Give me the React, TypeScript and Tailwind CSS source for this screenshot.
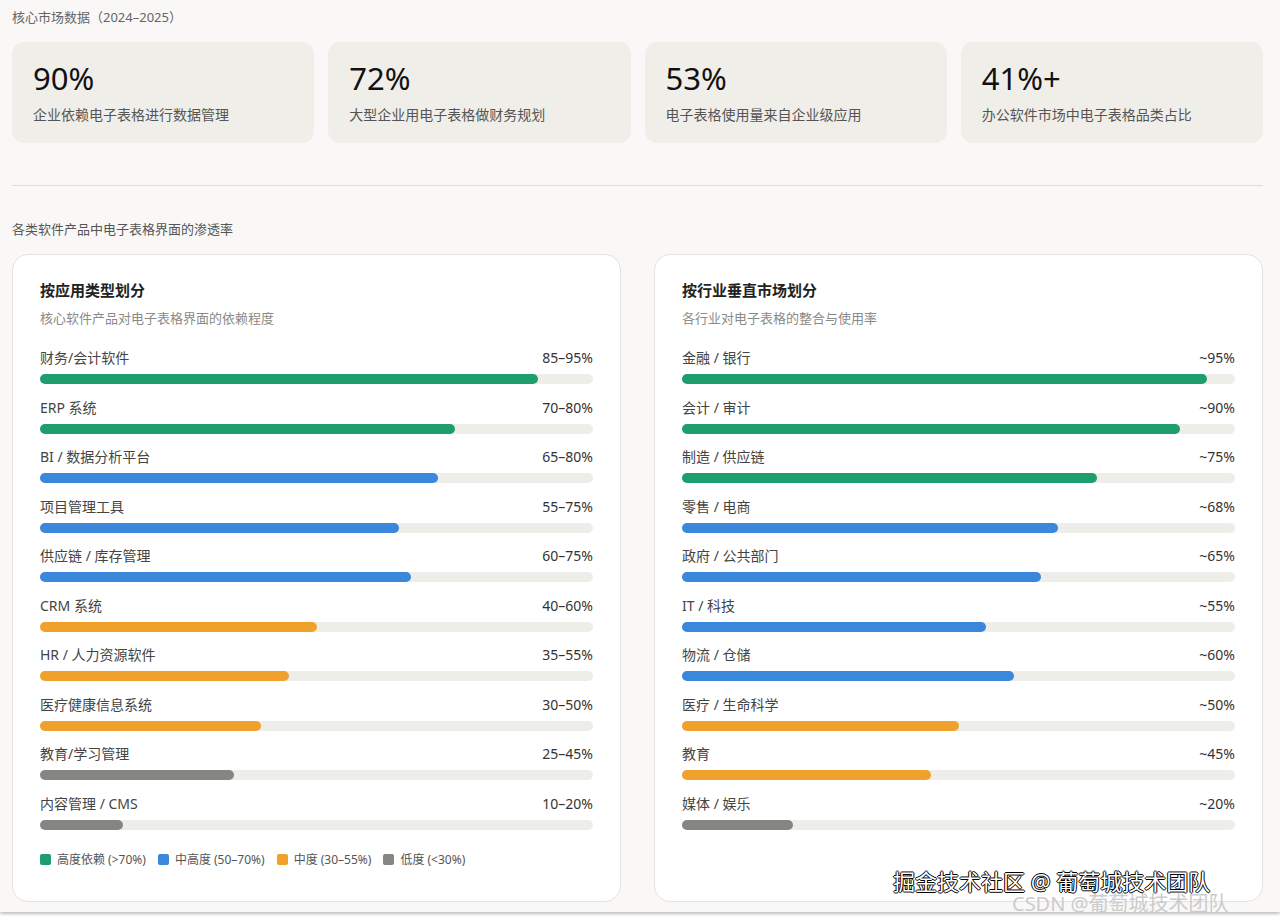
const FONT = { fontFamily: '"Noto Sans", "Noto Sans CJK SC", sans-serif' };

const G = 'bg-[#1e9d6f]';
const B = 'bg-[#3a87db]';
const O = 'bg-[#efa12b]';
const S = 'bg-[#858582]';

const stats = [
  { v: '90%', t: '企业依赖电子表格进行数据管理' },
  { v: '72%', t: '大型企业用电子表格做财务规划' },
  { v: '53%', t: '电子表格使用量来自企业级应用' },
  { v: '41%+', t: '办公软件市场中电子表格品类占比' },
];

const apps = [
  ['财务/会计软件', '85–95%', 90, G],
  ['ERP 系统', '70–80%', 75, G],
  ['BI / 数据分析平台', '65–80%', 72, B],
  ['项目管理工具', '55–75%', 65, B],
  ['供应链 / 库存管理', '60–75%', 67, B],
  ['CRM 系统', '40–60%', 50, O],
  ['HR / 人力资源软件', '35–55%', 45, O],
  ['医疗健康信息系统', '30–50%', 40, O],
  ['教育/学习管理', '25–45%', 35, S],
  ['内容管理 / CMS', '10–20%', 15, S],
] as const;

const verticals = [
  ['金融 / 银行', '~95%', 95, G],
  ['会计 / 审计', '~90%', 90, G],
  ['制造 / 供应链', '~75%', 75, G],
  ['零售 / 电商', '~68%', 68, B],
  ['政府 / 公共部门', '~65%', 65, B],
  ['IT / 科技', '~55%', 55, B],
  ['物流 / 仓储', '~60%', 60, B],
  ['医疗 / 生命科学', '~50%', 50, O],
  ['教育', '~45%', 45, O],
  ['媒体 / 娱乐', '~20%', 20, S],
] as const;

function Panel({ title, sub, rows, legend }: { title: string; sub: string; rows: readonly (readonly [string, string, number, string])[]; legend?: boolean }) {
  return (
    <div className="flex-1 h-[648px] rounded-2xl border border-[#e4e2dd] bg-white px-[27px] pt-[24px]">
      <div className="text-[15px] font-semibold text-[#222] leading-[22px]">{title}</div>
      <div className="text-[13px] text-[#8a8a86] mt-[7px] leading-[20px]">{sub}</div>
      <div className="mt-[20px] flex flex-col gap-[13.5px]">
        {rows.map(([label, val, pct, color]) => (
          <div key={label}>
            <div className="flex justify-between text-[14px] leading-[20px] text-[#444]">
              <span>{label}</span>
              <span className="text-[#333]">{val}</span>
            </div>
            <div className="mt-[6px] h-[10px] rounded-full bg-[#efede9]">
              <div className={`h-full rounded-full ${color}`} style={{ width: `${pct}%` }} />
            </div>
          </div>
        ))}
      </div>
      {legend && (
        <div className="mt-[21px] flex items-center gap-[12px] text-[12px] text-[#555]">
          {[[G, '高度依赖 (>70%)'], [B, '中高度 (50–70%)'], [O, '中度 (30–55%)'], [S, '低度 (<30%)']].map(([c, t]) => (
            <span key={t} className="flex items-center gap-[6px]">
              <span className={`w-[11px] h-[11px] rounded-[2px] ${c}`} />
              {t}
            </span>
          ))}
        </div>
      )}
    </div>
  );
}

export default function App() {
  return (
    <div className="w-[1280px] h-[922px] bg-white relative overflow-hidden" style={FONT}>
      <div className="h-[912px] bg-[#f9f8f6] pl-[12px] pr-[17px] pt-[7px] shadow-[0_2px_3px_rgba(0,0,0,0.25)]">
        <div className="text-[13px] text-[#666] leading-[20px]">核心市场数据（2024–2025）</div>
        <div className="mt-[15px] flex gap-[14px]">
          {stats.map(s => (
            <div key={s.v} className="flex-1 h-[101px] rounded-xl bg-[#f0eee9] px-[21px] pt-[18px]">
              <div className="text-[31px] leading-[36px] text-[#111]">{s.v}</div>
              <div className="text-[14px] text-[#555] mt-[8px]">{s.t}</div>
            </div>
          ))}
        </div>
        <div className="mt-[42px] h-px bg-[#dedcd7]" />
        <div className="mt-[33px] text-[13px] text-[#555] leading-[20px]">各类软件产品中电子表格界面的渗透率</div>
        <div className="mt-[15px] flex gap-[33px]">
          <Panel title="按应用类型划分" sub="核心软件产品对电子表格界面的依赖程度" rows={apps} legend />
          <Panel title="按行业垂直市场划分" sub="各行业对电子表格的整合与使用率" rows={verticals} />
        </div>
      </div>
      <div className="absolute left-[1012px] top-[892px] text-[20px] text-[#ccc] leading-[24px]">CSDN @葡萄城技术团队</div>
      <div
        className="absolute left-[893px] top-[866px] text-[22px] text-white leading-[30px]"
        style={{ textShadow: '1px 0 #000, -1px 0 #000, 0 1px #000, 0 -1px #000' }}
      >
        掘金技术社区 @ 葡萄城技术团队
      </div>
    </div>
  );
}
